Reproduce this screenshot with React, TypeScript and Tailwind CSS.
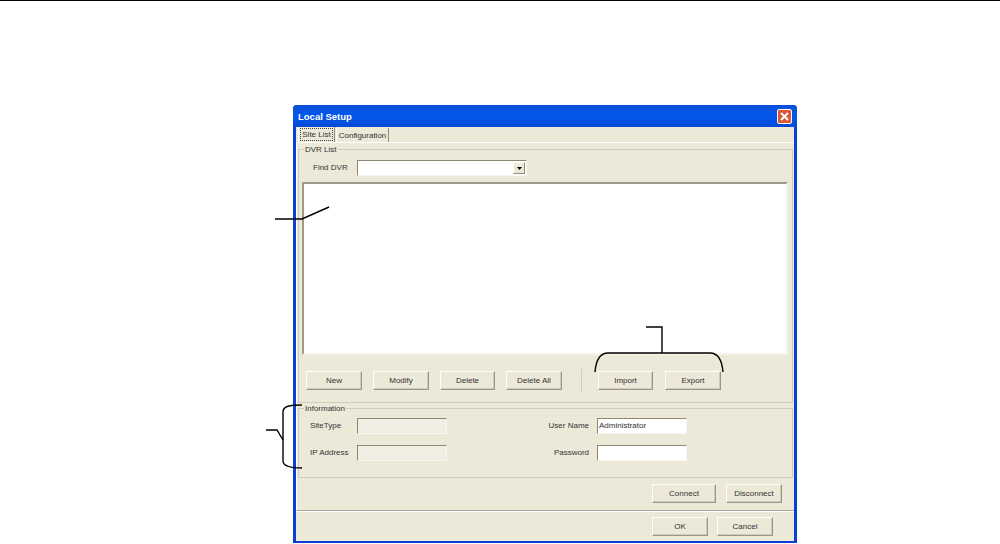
import React from 'react';

function Btn({ label, width }: { label: string; width: string }) {
  return (
    <button
      className={`${width} h-[19px] shrink-0 bg-[#ece9d8] text-[8px] text-[#333] border border-t-white border-l-white border-r-[#9a9786] border-b-[#9a9786] shadow-[inset_-1px_-1px_0_#cfccbc]`}
    >
      {label}
    </button>
  );
}

function Field({ value, disabled }: { value?: string; disabled?: boolean }) {
  return (
    <div
      className={`w-[90px] h-[16px] shrink-0 pl-[1px] text-[8px] leading-[13px] text-[#333] border border-t-[#8b8875] border-l-[#8b8875] border-r-[#f7f6f0] border-b-[#f7f6f0] ${
        disabled ? 'bg-[#f0eee2]' : 'bg-white'
      }`}
    >
      {value}
    </div>
  );
}

export default function App() {
  return (
    <div className="relative w-[1000px] h-[544px] bg-white overflow-hidden font-['Liberation_Sans',sans-serif]">
      <div className="h-px bg-black" />

      {/* Local Setup window */}
      <div className="ml-[293px] mt-[104px] w-[504px] h-[438px] flex flex-col rounded-t-[4px] bg-[#0a3fd8] px-[3px] pb-[2px]">
        <div className="h-[22px] -mx-[3px] px-[5px] flex items-center justify-between rounded-t-[4px] bg-gradient-to-b from-[#0a4fd8] via-[#0058ea] to-[#0349d8]">
          <span className="pt-[3px] text-[9.5px] font-bold text-white">Local Setup</span>
          <div className="w-[15px] h-[15px] flex items-center justify-center rounded-[2px] border border-white bg-[#d9583a]">
            <svg width="9" height="9" viewBox="0 0 9 9">
              <path d="M1 1 L8 8 M8 1 L1 8" stroke="#fff" strokeWidth="2" />
            </svg>
          </div>
        </div>

        <div className="flex-1 flex flex-col bg-[#ece9d8] text-[8px] text-[#333]">
          {/* tabs */}
          <div className="h-[15px] pl-[2px] flex items-end gap-[1px]">
            <div className="w-[37px] h-[15px] flex items-center justify-center border-r border-r-[#8f8c7c] border-l border-l-white">
              <span className="px-[1px] border border-dotted border-[#444] leading-[11px]">Site List</span>
            </div>
            <div className="w-[53px] h-[14px] pt-[1px] flex items-center justify-center border-l border-l-white border-r border-r-[#8f8c7c]">
              Configuration
            </div>
          </div>

          {/* tab panel */}
          <div className="h-[369px] flex flex-col pl-[1px] pt-[1px] border-t border-t-white border-l border-l-white border-b border-b-[#aca899] shadow-[0_1px_0_#fff]">
            <fieldset className="w-[495px] h-[259px] border border-[#cfccbb]">
              <legend className="ml-[5px] px-[1px] h-[10px] leading-[12px]">DVR List</legend>
              <div className="mt-[6px] pl-[14px] flex items-center">
                <span className="w-[44px] shrink-0">Find DVR</span>
                <div className="w-[170px] h-[16px] flex justify-end items-center pr-[1px] bg-white border border-t-[#8b8875] border-l-[#8b8875] border-r-[#f7f6f0] border-b-[#f7f6f0]">
                  <div className="w-[12px] h-[12px] flex items-center justify-center bg-[#ece9d8] border border-t-white border-l-white border-r-[#8f8c7c] border-b-[#8f8c7c]">
                    <svg width="5" height="3" viewBox="0 0 5 3">
                      <path d="M0 0 H5 L2.5 3 Z" fill="#000" />
                    </svg>
                  </div>
                </div>
              </div>
              <div className="mt-[6px] ml-[3px] w-[486px] h-[173px] bg-white border-2 border-t-[#9d9a86] border-l-[#9d9a86] border-r-[#f4f3ec] border-b-[#f4f3ec]" />
              <div className="mt-[14px] ml-[7px] flex items-center">
                <div className="flex gap-[11px]">
                  <Btn label="New" width="w-[56px]" />
                  <Btn label="Modify" width="w-[56px]" />
                  <Btn label="Delete" width="w-[55px]" />
                  <Btn label="Delete All" width="w-[56px]" />
                </div>
                <div className="ml-[19px] mr-[16px] w-px h-[23px] bg-[#d0cdbc]" />
                <div className="flex gap-[12px]">
                  <Btn label="Import" width="w-[55px]" />
                  <Btn label="Export" width="w-[56px]" />
                </div>
              </div>
            </fieldset>

            <fieldset className="w-[495px] h-[75px] border border-[#cfccbb]">
              <legend className="ml-[5px] px-[1px] h-[10px] leading-[12px]">Information</legend>
              <div className="mt-[5px] flex flex-col gap-[11px]">
                <div className="pl-[11px] flex items-center">
                  <span className="w-[47px] shrink-0">SiteType</span>
                  <Field disabled />
                  <span className="w-[142px] shrink-0 text-right">User Name</span>
                  <div className="w-[8px] shrink-0" />
                  <Field value="Administrator" />
                </div>
                <div className="pl-[11px] flex items-center">
                  <span className="w-[47px] shrink-0">IP Address</span>
                  <Field disabled />
                  <span className="w-[142px] shrink-0 text-right">Password</span>
                  <div className="w-[8px] shrink-0" />
                  <Field />
                </div>
              </div>
            </fieldset>

            <div className="mt-[6px] pr-[12px] flex justify-end gap-[10px]">
              <Btn label="Connect" width="w-[64px]" />
              <Btn label="Disconnect" width="w-[56px]" />
            </div>
          </div>

          {/* dialog buttons */}
          <div className="mt-[6px] pr-[21px] flex justify-end gap-[9px]">
            <Btn label="OK" width="w-[56px]" />
            <Btn label="Cancel" width="w-[56px]" />
          </div>
        </div>
      </div>

      {/* callout lines drawn over the screenshot */}
      <svg className="absolute inset-0 pointer-events-none" width="1000" height="544" fill="none" stroke="#000" strokeWidth="1.4">
        <path d="M275 219 H302 L329 207" />
        <path d="M302 405 C290 405 283 406 283 412 V461 C283 466 290 468 302 468" />
        <path d="M266 430 H277 L283 440" />
        <path d="M646 327 H662 V353" />
        <path d="M595 372 C596 360 600 353 608 353 H710 C718 353 722 360 723 372" />
      </svg>
    </div>
  );
}
